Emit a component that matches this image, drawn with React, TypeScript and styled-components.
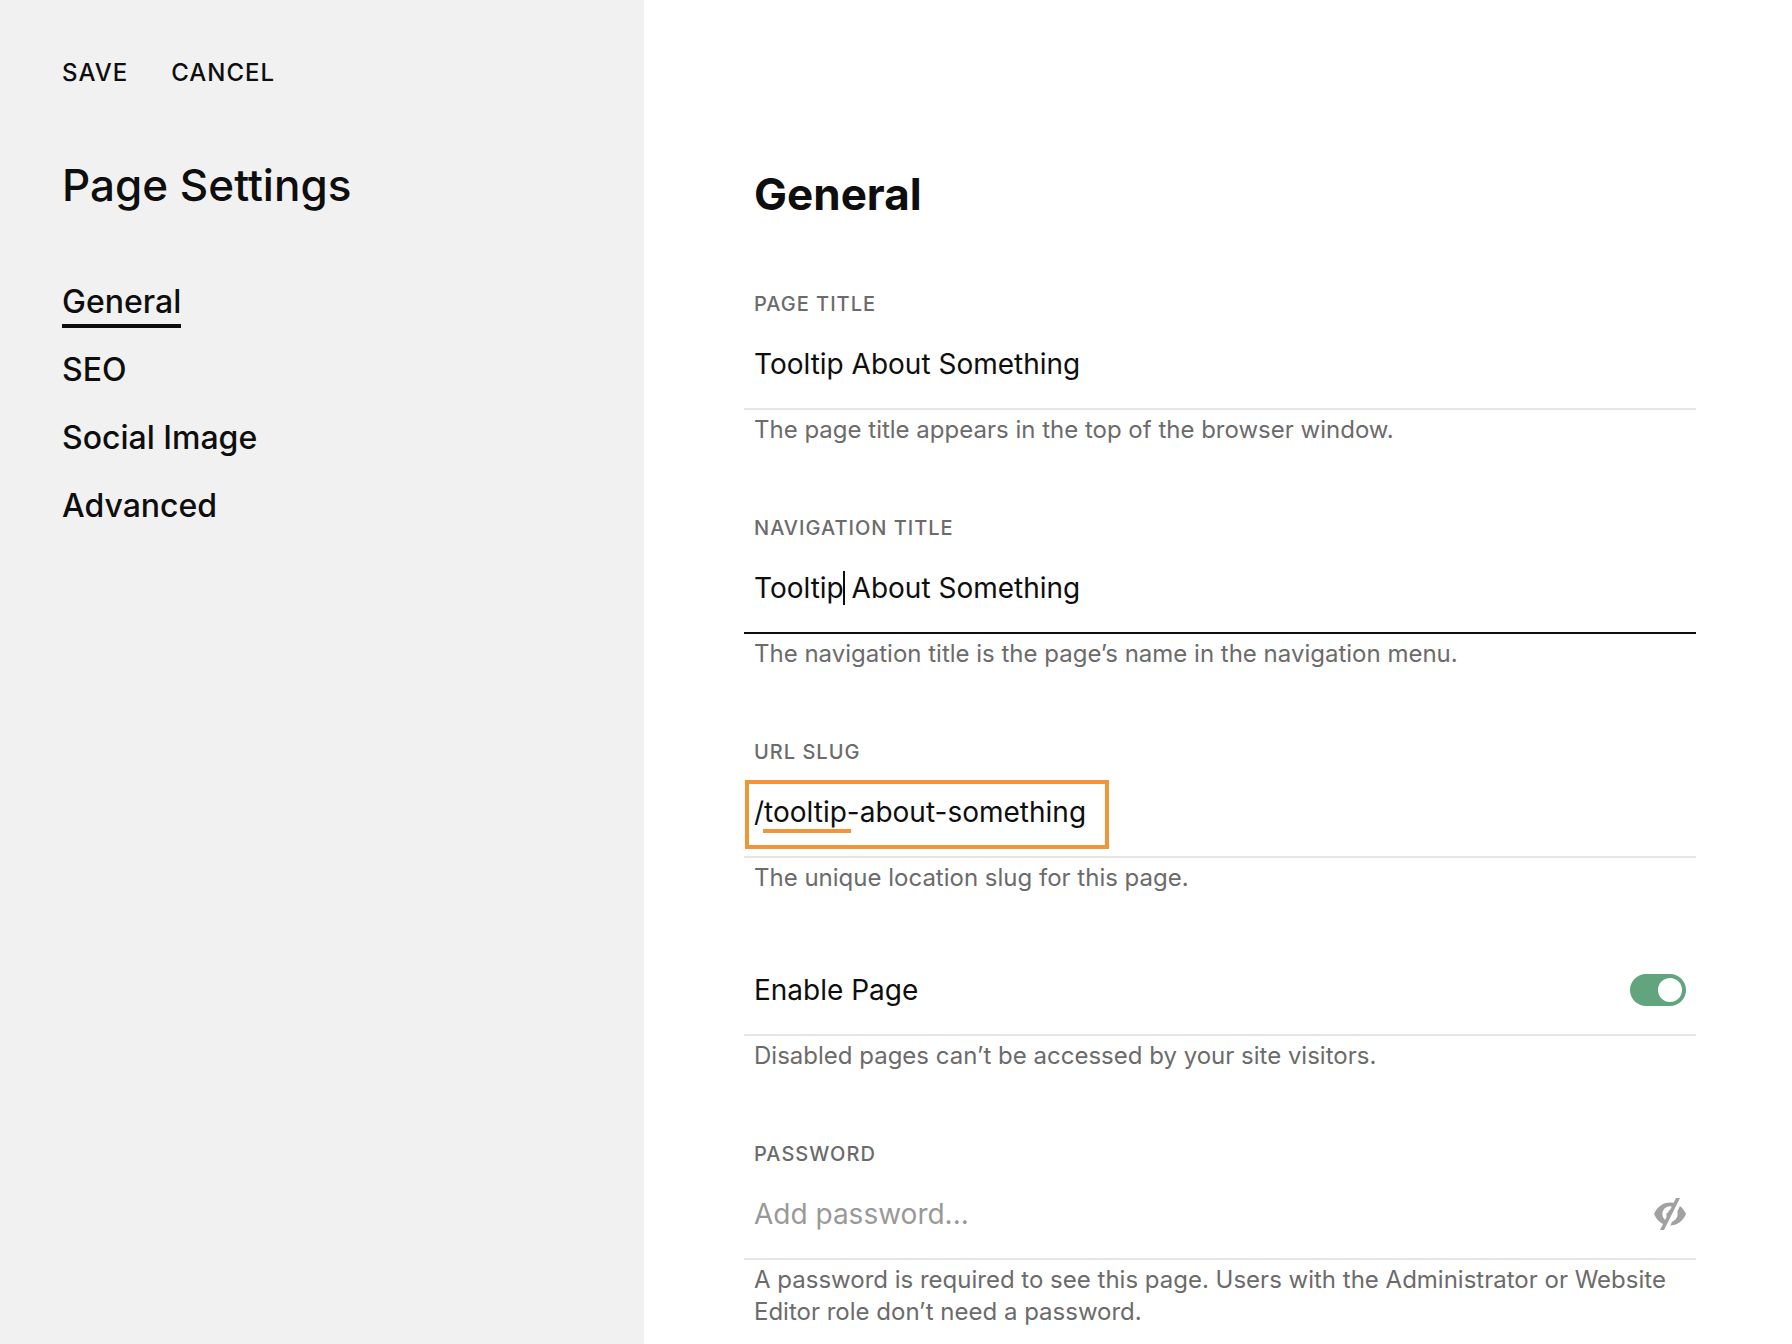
import React, { useState } from "react";
import styled, { createGlobalStyle } from "styled-components";

const ink = "#0e0e0e";
const muted = "#6b6b6b";
const line = "#e5e5e5";
const accent = "#f09637";

const GlobalStyle = createGlobalStyle`
  *, *::before, *::after { box-sizing: border-box; }
  body {
    margin: 0;
    background: #ffffff;
    color: ${ink};
    font-family: Inter, "Liberation Sans", sans-serif;
  }
`;

const Page = styled.div`
  display: grid;
  grid-template-columns: minmax(280px, 644px) minmax(0, 1148fr);
  height: 100vh;
  overflow: hidden;
`;

const Sidebar = styled.aside`
  padding: 57px 62px;
  background: #f1f1f1;
`;

const Actions = styled.div`
  display: flex;
  gap: 43px;
`;

const ActionButton = styled.button`
  padding: 0;
  border: 0;
  background: none;
  color: ${ink};
  font: 500 24px/32px Inter, "Liberation Sans", sans-serif;
  letter-spacing: 1px;
  text-transform: uppercase;
  cursor: pointer;
`;

const SidebarTitle = styled.h1`
  margin: 68px 0 0;
  font-size: 44px;
  font-weight: 500;
  line-height: 56px;
`;

const NavList = styled.ul`
  display: flex;
  flex-direction: column;
  align-items: flex-start;
  gap: 22px;
  margin: 69px 0 0;
  padding: 0;
  list-style: none;
`;

const NavLink = styled.a<{ $active: boolean }>`
  display: block;
  padding-bottom: 2px;
  border-bottom: 4px solid ${(p) => (p.$active ? ink : "transparent")};
  color: ${ink};
  font-size: 32px;
  font-weight: 500;
  line-height: 40px;
  text-decoration: none;
`;

const Main = styled.main`
  padding: 166px 96px 0 100px;
`;

const Form = styled.form`
  display: flex;
  flex-direction: column;
  gap: 52px;
`;

const SectionTitle = styled.h2`
  margin: 0;
  padding-left: 10px;
  font-size: 44px;
  font-weight: 700;
  line-height: 56px;
`;

const Field = styled.div`
  padding-top: 18px;
`;

const Label = styled.label`
  display: block;
  margin-bottom: 4px;
  padding-left: 10px;
  color: ${muted};
  font-size: 20px;
  font-weight: 500;
  line-height: 24px;
  letter-spacing: 1px;
  text-transform: uppercase;
`;

const Control = styled.div<{ $focused?: boolean }>`
  position: relative;
  display: flex;
  align-items: center;
  justify-content: space-between;
  height: 90px;
  padding: 0 10px;
  border-bottom: 2px solid ${(p) => (p.$focused ? ink : line)};
`;

const TextInput = styled.input`
  flex: 1;
  min-width: 0;
  height: 88px;
  padding: 0;
  border: 0;
  outline: none;
  background: none;
  color: ${ink};
  caret-color: transparent;
  font: 400 28px/36px Inter, "Liberation Sans", sans-serif;
  &::placeholder { color: #999999; opacity: 1; }
`;

const Help = styled.p`
  margin: 4px 0 0;
  padding: 0 10px;
  color: ${muted};
  font-size: 24px;
  line-height: 32px;
`;

const Caret = styled.span`
  position: absolute;
  top: 27px;
  left: 99px;
  width: 2px;
  height: 34px;
  background: ${ink};
`;

const Highlight = styled.span`
  position: absolute;
  top: 12px;
  left: 1px;
  width: 364px;
  height: 69px;
  border: 4px solid ${accent};
  pointer-events: none;
`;

const WordMark = styled.span`
  position: absolute;
  top: 61px;
  left: 19px;
  width: 88px;
  height: 4px;
  background: ${accent};
`;

const ToggleLabel = styled.label`
  font-size: 28px;
  line-height: 36px;
`;

const Toggle = styled.input`
  appearance: none;
  display: flex;
  width: 56px;
  height: 32px;
  margin: 0;
  padding: 4px;
  border-radius: 16px;
  background: #b5b5b5;
  cursor: pointer;
  &::before {
    content: "";
    width: 24px;
    height: 24px;
    border-radius: 50%;
    background: #ffffff;
  }
  &:checked {
    justify-content: flex-end;
    background: #62a47e;
  }
`;

const IconButton = styled.button`
  display: flex;
  padding: 0;
  border: 0;
  background: none;
  color: #a1a1a1;
  cursor: pointer;
`;

function HiddenEye() {
  return (
    <svg width="32" height="32" viewBox="0 0 32 32" fill="currentColor" aria-hidden="true">
      <path
        d="M0 16C3 9 9 4.500 16 4.500S29 9 32 16c-3 7-9 11.500-16 11.500S3 23 0 16zM16 8.300a7.700 7.700 0 1 0 0 15.400 7.700 7.700 0 0 0 0-15.400z"
        fillRule="evenodd"
      />
      <path d="M18 12.200c-1.500-.4-2.400-.2-3.400.6.200 1.200-.6 2.200-1.900 2.200-.8 2 0 4 1.300 5.500z" />
      <path d="M25.500 0h4.500L14 32H9.500z" fill="#ffffff" />
      <path d="M22 0h4L10 32H6z" />
    </svg>
  );
}

const sections = ["General", "SEO", "Social Image", "Advanced"];

export default function App() {
  const [enabled, setEnabled] = useState(true);
  return (
    <>
      <GlobalStyle />
      <Page>
        <Sidebar>
          <Actions>
            <ActionButton type="submit" form="page-settings">Save</ActionButton>
            <ActionButton type="button">Cancel</ActionButton>
          </Actions>
          <SidebarTitle>Page Settings</SidebarTitle>
          <nav aria-label="Page Settings">
            <NavList>
              {sections.map((name, i) => (
                <li key={name}>
                  <NavLink href="#" $active={i === 0}>{name}</NavLink>
                </li>
              ))}
            </NavList>
          </nav>
        </Sidebar>
        <Main>
          <Form id="page-settings" onSubmit={(e) => e.preventDefault()}>
            <SectionTitle>General</SectionTitle>
            <Field>
              <Label htmlFor="page-title">Page Title</Label>
              <Control>
                <TextInput id="page-title" defaultValue="Tooltip About Something" />
              </Control>
              <Help>The page title appears in the top of the browser window.</Help>
            </Field>
            <Field>
              <Label htmlFor="nav-title">Navigation Title</Label>
              <Control $focused>
                <TextInput id="nav-title" defaultValue="Tooltip About Something" />
                <Caret />
              </Control>
              <Help>The navigation title is the page’s name in the navigation menu.</Help>
            </Field>
            <Field>
              <Label htmlFor="slug">URL Slug</Label>
              <Control>
                <TextInput id="slug" defaultValue="/tooltip-about-something" />
                <Highlight />
                <WordMark />
              </Control>
              <Help>The unique location slug for this page.</Help>
            </Field>
            <div>
              <Control>
                <ToggleLabel htmlFor="enabled">Enable Page</ToggleLabel>
                <Toggle
                  id="enabled"
                  type="checkbox"
                  role="switch"
                  checked={enabled}
                  onChange={(e) => setEnabled(e.target.checked)}
                />
              </Control>
              <Help>Disabled pages can’t be accessed by your site visitors.</Help>
            </div>
            <Field>
              <Label htmlFor="password">Password</Label>
              <Control>
                <TextInput id="password" type="password" placeholder="Add password..." />
                <IconButton type="button" aria-label="Show password">
                  <HiddenEye />
                </IconButton>
              </Control>
              <Help>
                A password is required to see this page. Users with the Administrator or Website
                Editor role don’t need a password.
              </Help>
            </Field>
          </Form>
        </Main>
      </Page>
    </>
  );
}
